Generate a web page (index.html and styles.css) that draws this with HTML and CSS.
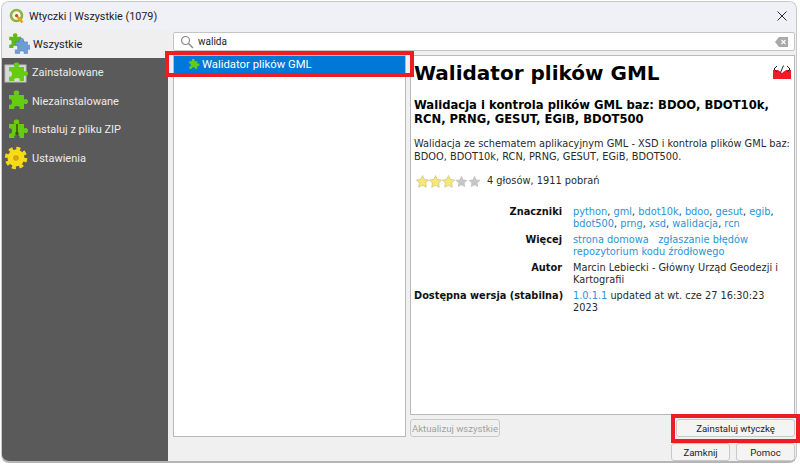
FILE: index.html
```html
<!DOCTYPE html>
<html lang="pl">
<head>
<meta charset="utf-8">
<title>Wtyczki</title>
<link rel="stylesheet" href="styles.css">
</head>
<body>
<svg class="defs" width="0" height="0" aria-hidden="true">
  <defs>
    <path id="puzzle" d="M4 6h5.500c-1.600-2.600-.6-4.500 2-4.500s3.600 1.900 2 4.500H19v4.500c2.300-1.300 4-.3 4 2s-1.700 3.300-4 2V20h-4.500c.9-1.800 0-3-2.500-3s-3.400 1.200-2.500 3H4v-4.500c1.800 1 3-.2 3-2.500s-1.200-3.500-3-2.500z"/>
  </defs>
</svg>
<div class="window">
  <header class="titlebar">
    <svg class="qgis" viewBox="0 0 16 16" width="16" height="16">
      <circle cx="7.500" cy="7.500" r="5.500" fill="#f4f6ea" stroke="#8fb43a" stroke-width="2.600"/>
      <path d="M7 7l6.500 7.500" stroke="#e2a11f" stroke-width="2.600"/>
      <circle cx="7.500" cy="7.500" r="1.500" fill="#d23f2e"/>
    </svg>
    <span class="title">Wtyczki | Wszystkie (1079)</span>
    <svg class="close" viewBox="0 0 10 10" width="10" height="10"><path d="M.5 .5l9 9M9.500 .5l-9 9" stroke="#2c2c2c" stroke-width="1"/></svg>
  </header>
  <div class="content">
    <nav class="sidebar">
      <div class="nav-item active">
        <svg class="nav-icon" viewBox="0 0 24 24" width="24" height="24">
          <use href="#puzzle" fill="#5fb91a" transform="translate(0 -1) scale(.8)"/>
          <use href="#puzzle" fill="#6d9dd6" stroke="#4a78b0" stroke-width=".6" transform="translate(6 4) scale(.82)"/>
        </svg>
        <span>Wszystkie</span>
      </div>
      <div class="nav-item">
        <svg class="nav-icon" viewBox="0 0 24 24" width="24" height="24">
          <rect x="1" y="4" width="21" height="17" fill="#d9d9d9" stroke="#bdbdbd" stroke-width="1"/>
          <use href="#puzzle" fill="#66cc12" transform="translate(1 0)"/>
        </svg>
        <span>Zainstalowane</span>
      </div>
      <div class="nav-item">
        <svg class="nav-icon" viewBox="0 0 24 24" width="24" height="24"><use href="#puzzle" fill="#66cc12" transform="translate(1 0)"/></svg>
        <span>Niezainstalowane</span>
      </div>
      <div class="nav-item">
        <svg class="nav-icon" viewBox="0 0 24 24" width="24" height="24">
          <use href="#puzzle" fill="#66cc12" transform="translate(1 0)"/>
          <path d="M13 6v9" stroke="#39520f" stroke-width="1.500"/>
          <circle cx="13" cy="15.500" r="1.700" fill="#39520f"/>
        </svg>
        <span>Instaluj z pliku ZIP</span>
      </div>
      <div class="nav-item">
        <svg class="nav-icon" viewBox="0 0 24 24" width="24" height="24">
          <circle cx="12" cy="12" r="6" fill="#ffe92e" stroke="#f7db14" stroke-width="5"/>
          <circle cx="12" cy="12" r="9.500" fill="none" stroke="#f6d818" stroke-width="3.500" stroke-dasharray="4 3.460"/>
          <circle cx="12" cy="12" r="3" fill="#d9a50c"/>
        </svg>
        <span>Ustawienia</span>
      </div>
    </nav>
    <main class="main">
      <div class="search">
        <svg viewBox="0 0 14 14" width="14" height="14"><circle cx="5.500" cy="5.500" r="4" fill="none" stroke="#8a8a8a" stroke-width="1.200"/><path d="M8.500 8.500l4.500 4.500" stroke="#8a8a8a" stroke-width="1.400"/></svg>
        <span class="query">walida</span>
        <svg class="clear" viewBox="0 0 13 10" width="13" height="10"><path d="M4 0h9v10H4L0 5z" fill="#a9a9a9"/><path d="M6.500 3l4 4m0-4l-4 4" stroke="#fff" stroke-width="1.200"/></svg>
      </div>
      <div class="panes">
        <div class="list">
          <div class="list-row">
            <svg viewBox="0 0 24 24" width="13" height="13"><use href="#puzzle" fill="#66cc12"/></svg>
            <span>Walidator plików GML</span>
          </div>
        </div>
        <div class="right">
          <article class="detail">
            <svg class="badge" viewBox="0 0 18 14" width="18" height="14">
              <path d="M0 5h5l4 3 4-3h5v9H0z" fill="#ee1c25"/>
              <path d="M4 1L1 4l3 3M14 1l3 3-3 3M10.500 .5L7.500 7.500" fill="none" stroke="#222" stroke-width="1"/>
            </svg>
            <h1>Walidator plików GML</h1>
            <h2>Walidacja i kontrola plików GML baz: BDOO, BDOT10k, RCN, PRNG, GESUT, EGiB, BDOT500</h2>
            <p class="desc">Walidacja ze schematem aplikacyjnym GML - XSD i kontrola plików GML baz: BDOO, BDOT10k, RCN, PRNG, GESUT, EGiB, BDOT500.</p>
            <div class="rating">
              <svg viewBox="0 0 65 13" width="65" height="13">
                <defs><path id="star" d="M6.500 .5l1.900 3.900 4.200.6-3 3 .7 4.300-3.800-2-3.800 2 .7-4.300-3-3 4.200-.6z"/></defs>
                <use href="#star" fill="#f5e878" stroke="#b7ad6a" stroke-width=".5"/>
                <use href="#star" x="13" fill="#f5e878" stroke="#b7ad6a" stroke-width=".5"/>
                <use href="#star" x="26" fill="#f5e878" stroke="#b7ad6a" stroke-width=".5"/>
                <use href="#star" x="39" fill="#c6c6c6"/>
                <use href="#star" x="52" fill="#c6c6c6"/>
              </svg>
              <span>4 głosów, 1911 pobrań</span>
            </div>
            <dl class="meta">
              <dt>Znaczniki</dt>
              <dd><a>python</a>, <a>gml</a>, <a>bdot10k</a>, <a>bdoo</a>, <a>gesut</a>, <a>egib</a>, <a>bdot500</a>, <a>prng</a>, <a>xsd</a>, <a>walidacja</a>, <a>rcn</a></dd>
              <dt>Więcej</dt>
              <dd><a>strona domowa</a> &nbsp; <a>zgłaszanie błędów</a><br><a>repozytorium kodu źródłowego</a></dd>
              <dt>Autor</dt>
              <dd>Marcin Lebiecki - Główny Urząd Geodezji i Kartografii</dd>
              <dt>Dostępna wersja (stabilna)</dt>
              <dd><a>1.0.1.1</a> updated at wt. cze 27 16:30:23 2023</dd>
            </dl>
          </article>
          <div class="actions">
            <button class="btn disabled">Aktualizuj wszystkie</button>
            <button class="btn install">Zainstaluj wtyczkę</button>
          </div>
        </div>
      </div>
      <div class="footer">
        <button class="btn foot">Zamknij</button>
        <button class="btn foot">Pomoc</button>
      </div>
    </main>
  </div>
</div>
<div class="hl hl-list"></div>
<div class="hl hl-install"></div>
</body>
</html>
```
FILE: styles.css
```css
* { box-sizing: border-box; }
html, body { margin: 0; height: 100%; }
body { position: relative; width: 800px; height: 464px; background: #fff; overflow: hidden; font-family: Roboto, "Open Sans", sans-serif; }
.defs { position: absolute; }
.window { margin: 1px 0 0 1px; width: 796px; height: 462px; display: flex; flex-direction: column; border: 1px solid #c8c8c8; border-bottom: 2px solid #b5b5b5; border-radius: 8px; overflow: hidden; background: #f0f0f0; }
.titlebar { height: 28px; flex: none; display: flex; align-items: center; padding: 0 9px 0 7px; background: #eff1f7; }
.qgis { flex: none; }
.title { margin-left: 4px; font-size: 10.800px; color: #1b1b1b; flex: 1; }
.content { flex: 1; display: flex; min-height: 0; }
.sidebar { width: 166px; flex: none; background: #5a5a5a; color: #ececec; font-size: 11px; display: flex; flex-direction: column; }
.nav-item { height: 28.500px; display: flex; align-items: center; padding: 1px 0 0 2px; gap: 4px; }
.nav-icon { flex: none; }
.nav-item.active { background: #efefef; color: #1c1c1c; height: 28px; gap: 3px; padding: 1px 0 0 4px; }
.main { flex: 1; min-width: 0; display: flex; flex-direction: column; padding: 2px 1px 0 5px; }
.search { height: 19px; flex: none; display: flex; align-items: center; background: #fff; border: 1px solid #c4c4c4; border-radius: 2px; padding: 0 6px; gap: 4px; font-size: 10px; color: #1c1c1c; }
.query { flex: 1; }
.panes { flex: 1; min-height: 0; display: flex; gap: 4px; margin-top: 4px; }
.list { width: 233px; flex: none; background: #fff; border: 1px solid #b9b9b9; }
.list-row { height: 17px; background: #0078d7; color: #fff; display: flex; align-items: center; padding: 0 0 1px 13px; gap: 2px; font-size: 11.300px; }
.right { flex: 1; min-width: 0; display: flex; flex-direction: column; }
.detail { position: relative; height: 360px; flex: none; background: #fff; border: 1px solid #b9b9b9; padding: 5px 3px 0 3px; font-family: "DejaVu Sans", sans-serif; font-size: 9.800px; line-height: 12px; color: #2a2a2a; overflow: hidden; }
.badge { position: absolute; top: 9px; right: 3px; }
h1 { margin: 0; font-size: 20px; line-height: 25px; color: #000; font-weight: 700; }
h2 { margin: 12px 0 0; font-size: 11.600px; line-height: 14px; color: #000; font-weight: 700; }
.desc { margin: 10.500px 0 0; line-height: 13px; }
.rating { margin: 12px 0 0 2px; display: flex; align-items: center; gap: 6px; height: 13px; }
.meta { margin: 18.500px 0 0; display: grid; grid-template-columns: 148px 1fr; column-gap: 11px; row-gap: 4px; }
.meta dt { margin: 0; text-align: right; font-weight: 700; color: #111; white-space: nowrap; }
.meta dd { margin: 0; }
.meta a { color: #2b93d6; }
.actions { flex: 1; display: flex; justify-content: space-between; align-items: flex-start; padding-top: 4px; }
.btn { font-family: Roboto, "Open Sans", sans-serif; font-size: 9.600px; color: #1c1c1c; background: #f4f4f4; border: 1px solid #c9c9c9; border-radius: 3px; padding: 0; white-space: nowrap; }
.btn.disabled { width: 90px; height: 18px; color: #a2a2a2; background: #f0f0f0; }
.btn.install { width: 119px; height: 18px; }
.footer { flex: none; height: 18px; display: flex; justify-content: flex-end; gap: 6px; margin-top: 6px; }
.btn.foot { height: 18px; width: 59px; }
.hl { position: absolute; border: 4px solid #ee1c25; pointer-events: none; }
.hl-list { left: 165px; top: 51px; width: 249px; height: 26px; }
.hl-install { left: 671px; top: 414px; width: 129px; height: 29px; }
```
